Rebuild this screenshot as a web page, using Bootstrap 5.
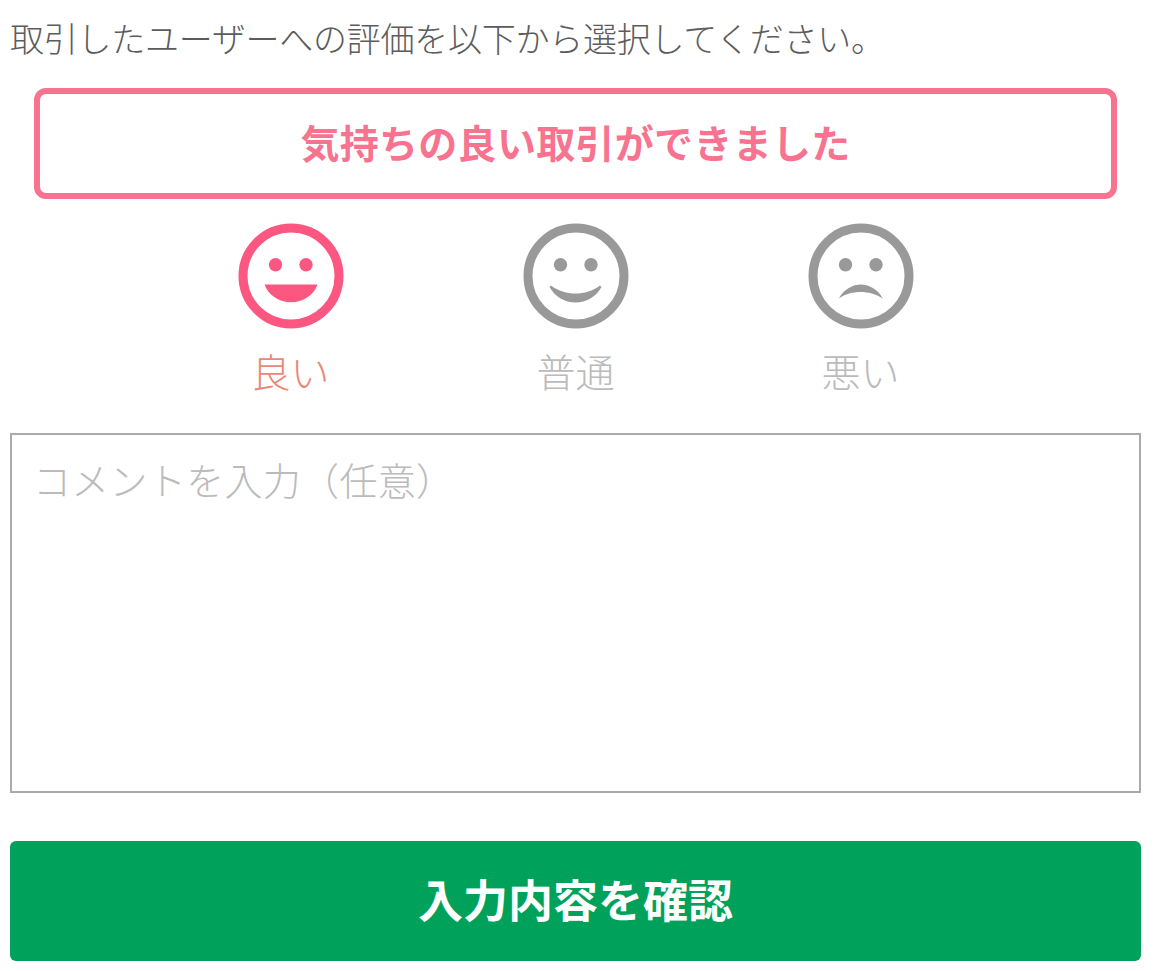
<!DOCTYPE html>
<html lang="ja"><head><meta charset="utf-8">
<link href="https://cdn.jsdelivr.net/npm/bootstrap@5.3.0/dist/css/bootstrap.min.css" rel="stylesheet">
<style>
html,body{background:#fff;}
body{font-family:"Noto Sans CJK JP","Liberation Sans",sans-serif;}
.page-wrap{padding:14px 14px 0 10px;width:1155px;height:971px;overflow:hidden;}
.intro-text{font-size:34px;line-height:48px;color:#5c5c5c;margin:0;white-space:nowrap;letter-spacing:-.25px;font-weight:300;}
.rate-banner{margin:26px 24px 0 24px;height:111px;border:6px solid #f7738f;border-radius:12px;color:#f7738f;font-size:39px;font-weight:700;padding-bottom:4px;letter-spacing:.3px;}
.face-row{margin-top:24px;}
.face-item{width:285px;}
.face-item svg{width:106px;height:106px;display:block;}
.face-label{font-size:39px;line-height:48px;margin-top:17px;color:#bbb;font-weight:300;}
.face-label.is-good{color:#ea8877;}
.comment-box{margin-top:39px;height:360px;width:1131px;border:2px solid #aaa;border-radius:0;padding:19px 21px;font-size:38px;line-height:50px;resize:none;color:#333;font-weight:300;letter-spacing:.3px;}
.comment-box::placeholder{color:#bbb;opacity:1;}
.comment-box:focus{border-color:#aaa;box-shadow:none;}
.confirm-btn{margin-top:48px;width:1131px;height:120px;background:#00a25b;border:0;border-radius:6px;color:#fff;font-size:45px;font-weight:700;padding-bottom:10px;}
.confirm-btn:hover{background:#00a25b;color:#fff;}
</style></head><body>
<div class="page-wrap">
<p class="intro-text">取引したユーザーへの評価を以下から選択してください。</p>
<div class="rate-banner d-flex align-items-center justify-content-center">気持ちの良い取引ができました</div>
<div class="face-row d-flex justify-content-center">
<div class="face-item d-flex flex-column align-items-center">
<svg viewBox="0 0 106 106"><circle cx="53" cy="53" r="48" fill="none" stroke="#fb5780" stroke-width="9"/><circle cx="37.5" cy="41.8" r="6.7" fill="#fb5780"/><circle cx="68" cy="41.8" r="6.7" fill="#fb5780"/><path d="M26.5 61.5H79.5C76 72 65 79.3 53 79.3C41 79.3 30 72 26.5 61.5Z" fill="#fb5780"/></svg>
<div class="face-label is-good">良い</div></div>
<div class="face-item d-flex flex-column align-items-center">
<svg viewBox="0 0 106 106"><circle cx="53" cy="53" r="48" fill="none" stroke="#999" stroke-width="9"/><circle cx="37.5" cy="41.8" r="6.7" fill="#999"/><circle cx="68" cy="41.8" r="6.7" fill="#999"/><path d="M26.5 64L28 62.5C35 68 44 70.5 52.5 70.5C61 70.5 70 68 77 62.5L78.5 64C73 74 63 79.5 52.5 79.5C42 79.5 32 74 26.5 64Z" fill="#999"/></svg>
<div class="face-label">普通</div></div>
<div class="face-item d-flex flex-column align-items-center">
<svg viewBox="0 0 106 106"><circle cx="53" cy="53" r="48" fill="none" stroke="#999" stroke-width="9"/><circle cx="37.5" cy="41.8" r="6.7" fill="#999"/><circle cx="68" cy="41.8" r="6.7" fill="#999"/><path d="M30.8 75.5C36 66 45 61.5 52.8 61.5C60.5 61.5 70 66 74.8 75.5C68 71 60 69 52.8 69C45 69 37 71 30.8 75.5Z" fill="#999"/></svg>
<div class="face-label">悪い</div></div>
</div>
<textarea class="comment-box form-control d-block" placeholder="コメントを入力（任意）"></textarea>
<button type="button" class="confirm-btn btn d-block">入力内容を確認</button>
</div>
</body></html>
